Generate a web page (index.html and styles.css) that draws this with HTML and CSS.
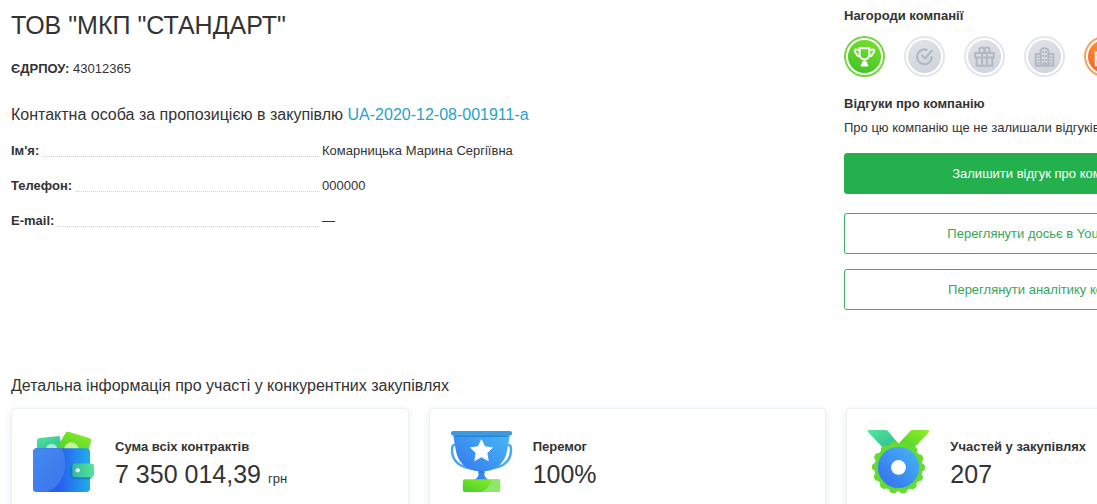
FILE: index.html
```html
<!DOCTYPE html>
<html lang="uk">
<head>
<meta charset="utf-8">
<title>ТОВ "МКП "СТАНДАРТ"</title>
<link rel="stylesheet" href="styles.css">
</head>
<body>
<main class="page">
  <div class="overview">
    <section class="company">
      <h1 class="company-name">ТОВ "МКП "СТАНДАРТ"</h1>
      <p class="code"><b>ЄДРПОУ:</b> 43012365</p>
      <h2 class="subtitle">Контактна особа за пропозицією в закупівлю <a class="link" href="#">UA-2020-12-08-001911-a</a></h2>
      <dl class="contacts">
        <div class="contact"><dt class="term">Ім'я:</dt><dd class="value">Комарницька Марина Сергіївна</dd></div>
        <div class="contact"><dt class="term">Телефон:</dt><dd class="value">000000</dd></div>
        <div class="contact"><dt class="term">E-mail:</dt><dd class="value">—</dd></div>
      </dl>
    </section>
    <aside class="side">
      <h3 class="side-title">Нагороди компанії</h3>
      <ul class="awards">
        <li class="award award-green">
          <svg viewBox="0 0 42 42" fill="none" stroke="#fff" stroke-width="2"><path d="M16 12.500h10v6c0 3-2 5.500-5 5.500s-5-2.500-5-5.500zM16 14h-3q-2-.5-2 1 0 1.500 1.500 3 1 3 4.500 3M26 14h3q2-.5 2 1 0 1.500-1.500 3-1 3-4.500 3M21 24v4"/><path d="M18.500 26.500h5v2.500h-5zM17.500 29h7v2h-7z" fill="#fff" stroke-width=".5"/></svg>
        </li>
        <li class="award">
          <svg viewBox="0 0 42 42" fill="none" stroke="#b2b8c1" stroke-width="2.200"><path d="M24 14.500a7.500 7.500 0 1 0 4.300 6M18 19.500l3.500 3.500 7.500-8.500"/></svg>
        </li>
        <li class="award">
          <svg viewBox="0 0 42 42" fill="none" stroke="#b2b8c1" stroke-width="2"><path d="M11.500 17.500h19v4.500h-19zM13 22h16v8.500H13zM18.500 17.500v13M23.500 17.500v13"/><circle cx="18.300" cy="14.500" r="2.700"/><circle cx="23.700" cy="14.500" r="2.700"/></svg>
        </li>
        <li class="award">
          <svg viewBox="0 0 42 42" fill="none" stroke="#b2b8c1" stroke-width="2"><path d="M11 30.500h20M12 30V18.500h5M30 30V18.500h-5M17 30V14.500l2.500-2h3l2.500 2V30"/><path d="M19.700 15.500v11M22.500 15.500v11" stroke-dasharray="2 2"/><path d="M14.700 21v8M27.300 21v8" stroke-dasharray="1.500 1.500"/><path d="M20 28h2.500v2H20z"/></svg>
        </li>
        <li class="award award-orange">
          <svg viewBox="0 0 42 42" fill="none" stroke="#fff" stroke-width="2"><path d="M12 17h18v13H12zM15 17v-3h4v3M12 22h18"/><path d="M15 20v6M12.500 24h5"/></svg>
        </li>
      </ul>
      <h3 class="side-title">Відгуки про компанію</h3>
      <p class="note">Про цю компанію ще не залишали відгуків</p>
      <div class="actions">
        <button class="button button-primary" type="button">Залишити відгук про компанію</button>
        <button class="button" type="button">Переглянути досьє в YouControl</button>
        <button class="button" type="button">Переглянути аналітику компанії</button>
      </div>
    </aside>
  </div>
  <section class="details">
    <h2 class="subtitle">Детальна інформація про участі у конкурентних закупівлях</h2>
    <div class="cards">
      <article class="card">
        <svg class="card-icon" viewBox="0 0 64 64">
          <defs>
            <linearGradient id="mint" x1="0" y1="0" x2="1" y2="1"><stop stop-color="#54e697"/><stop offset="1" stop-color="#29b99a"/></linearGradient>
            <linearGradient id="tag"><stop stop-color="#2fb9a0"/><stop offset="1" stop-color="#54e697"/></linearGradient>
            <linearGradient id="lime" x1="0" y1="1" x2="1" y2="0"><stop stop-color="#48cf27"/><stop offset="1" stop-color="#91ef2b"/></linearGradient>
            <linearGradient id="wallet"><stop stop-color="#2d55f3"/><stop offset=".5" stop-color="#2862ee"/><stop offset="1" stop-color="#1db0e8"/></linearGradient>
            <linearGradient id="blue" x1="0" y1="1" x2="1" y2="0"><stop stop-color="#326cef"/><stop offset="1" stop-color="#47b9f3"/></linearGradient>
            <linearGradient id="fold" x1="0" y1="0" x2=".8" y2="1"><stop stop-color="#458aed"/><stop offset="1" stop-color="#3c75ee"/></linearGradient>
          </defs>
          <path d="M5 11q0-3 3-3l20-2 3 14H5z" fill="url(#mint)"/>
          <circle cx="20" cy="20" r="6" fill="#a5efc9"/>
          <path d="M25 19 34 3q1-2 4-1l20 6q3 1 2 4l-3 9z" fill="url(#lime)"/>
          <circle cx="40" cy="20" r="7.500" fill="#c1f294"/>
          <rect x="1" y="18.500" width="58" height="44.500" rx="4" fill="url(#wallet)"/>
          <path d="M5 18.500h25c8 15 3 39-16 44.500H5q-4 0-4-4V22.500q0-4 4-4z" fill="url(#fold)"/>
          <rect x="39" y="35" width="22" height="15" rx="3" fill="#1669bd" opacity=".55"/>
          <rect x="41" y="34" width="22" height="14" rx="3" fill="url(#tag)"/>
          <circle cx="46.500" cy="41" r="2.200" fill="#fff"/>
        </svg>
        <div>
          <h3 class="card-title">Сума всіх контрактів</h3>
          <p class="figure">7 350 014,39 <span class="unit">грн</span></p>
        </div>
      </article>
      <article class="card">
        <svg class="card-icon" viewBox="0 0 64 64">
          <path d="M5 15Q2 15 2 20q0 16 19 19M59 15q3 0 3 5 0 16-19 19" fill="none" stroke="#48a9f0" stroke-width="2.500"/>
          <path d="M3 4h58l-3 17C56 33 47 41 35 42v4q1 4 8 6v2H21v-2q7-2 8-6v-4C17 41 8 33 6 21z" fill="url(#blue)"/>
          <rect x="1" y="1" width="62" height="4.500" rx="2" fill="#3a9be3"/>
          <path d="M5 5.500h54v1.500H5zM29 42h6v2h-6z" fill="#2783d4"/>
          <path d="m32 10 3.300 7 7.700 1-5.600 5.300 1.400 7.700-6.800-3.800-6.800 3.800 1.400-7.700L21 18l7.700-1z" fill="#fff" stroke="#fff" stroke-linejoin="round"/>
          <rect x="13" y="50" width="38" height="13" rx="2" fill="url(#lime)"/>
          <path d="M43 50h6q2 0 2 2v9q0 2-2 2H32q8-4 11-13z" fill="#8de86d"/>
        </svg>
        <div>
          <h3 class="card-title">Перемог</h3>
          <p class="figure">100%</p>
        </div>
      </article>
      <article class="card">
        <svg class="card-icon" viewBox="0 0 64 64">
          <path d="M2 0h17q2 0 3 2l10 12-14 6L1 2Q0 0 2 0z" fill="url(#mint)"/>
          <path d="M62 0H46q-2 0-3 2L32 14l14 6L63 2q1-2-1-2z" fill="url(#lime)"/>
          <circle cx="32" cy="38" r="24.500" fill="#62dc30"/>
          <circle cx="32" cy="38" r="23" fill="none" stroke="#62dc30" stroke-width="8" stroke-linecap="round" stroke-dasharray=".01 10.312"/>
          <circle cx="32" cy="38" r="21" fill="url(#blue)"/>
          <circle cx="32" cy="38" r="7.500" fill="#fff"/>
        </svg>
        <div>
          <h3 class="card-title">Участей у закупівлях</h3>
          <p class="figure">207</p>
        </div>
      </article>
    </div>
  </section>
</main>
</body>
</html>
```

FILE: styles.css
```css
* { box-sizing: border-box; }
html { overflow: hidden; }
body {
  margin: 0;
  height: 100vh;
  overflow: hidden;
  background: #fff;
  color: #333;
  font: 13px/20px "Liberation Sans", Arial, sans-serif;
}
h1, h2, h3, p, dl, dd, ul { margin: 0; padding: 0; }
.page { min-width: 1255px; padding: 6px 11px; }
.overview { display: grid; grid-template-columns: 1fr 400px; min-height: 369px; }
.company-name { font-size: 25px; line-height: 38px; font-weight: 400; }
.code { margin-top: 15px; }
.subtitle { font-size: 16px; line-height: 22px; font-weight: 400; }
.code + .subtitle { margin-top: 25px; }
.link { color: #2a9fc9; text-decoration: none; }
.contacts { display: grid; gap: 15px; margin-top: 15px; }
.contact { display: grid; grid-template-columns: 309px 1fr; gap: 2px; }
.term { display: flex; gap: 4px; font-weight: 700; }
.term::after { content: ""; flex: 1; height: 15px; border-bottom: 1px dotted #d0d0d0; }
.side-title { font-size: 13px; line-height: 20px; font-weight: 700; }
.awards { display: flex; gap: 19px; margin: 10px 0 17px; list-style: none; }
.award {
  width: 41px;
  height: 41px;
  flex: none;
  border-radius: 50%;
  background: radial-gradient(circle closest-side, transparent 16px, #fff 17px, #fff 18px, #e2e5ea 19px), linear-gradient(160deg, #e2e5eb, #ccd1d9);
}
.award svg { display: block; }
.award-green { background: radial-gradient(circle closest-side, transparent 16px, #fff 17px, #fff 18px, #6fd83b 19px), linear-gradient(200deg, #83e330, #35bf24); }
.award-orange { background: radial-gradient(circle closest-side, transparent 16px, #fff 17px, #fff 18px, #f8a05a 19px), linear-gradient(200deg, #ffa33d, #f05a22); }
.note { margin-top: 4px; white-space: nowrap; }
.actions { display: grid; margin-top: 15px; }
.button {
  height: 41px;
  border: 1px solid #3dac62;
  border-radius: 3px;
  background: #fff;
  color: #36a65a;
  font: inherit;
}
.button + .button { margin-top: 15px; }
.button-primary { background: #24b14d; border-color: #24b14d; color: #fff; }
.button-primary + .button { margin-top: 19px; }
.cards { display: grid; grid-template-columns: repeat(3, 1fr); gap: 20px; margin-top: 11px; }
.card {
  display: flex;
  gap: 20px;
  padding: 21px 20px;
  min-height: 120px;
  border: 1px solid #edf0f5;
  border-radius: 4px;
  box-shadow: 0 2px 10px #e8edf5;
}
.card-icon { width: 63px; height: 63px; flex: none; }
.card-title { margin-top: 7px; font-size: 13px; line-height: 20px; }
.figure { font-size: 25px; line-height: 34px; }
.unit { font-size: 13px; }
```
